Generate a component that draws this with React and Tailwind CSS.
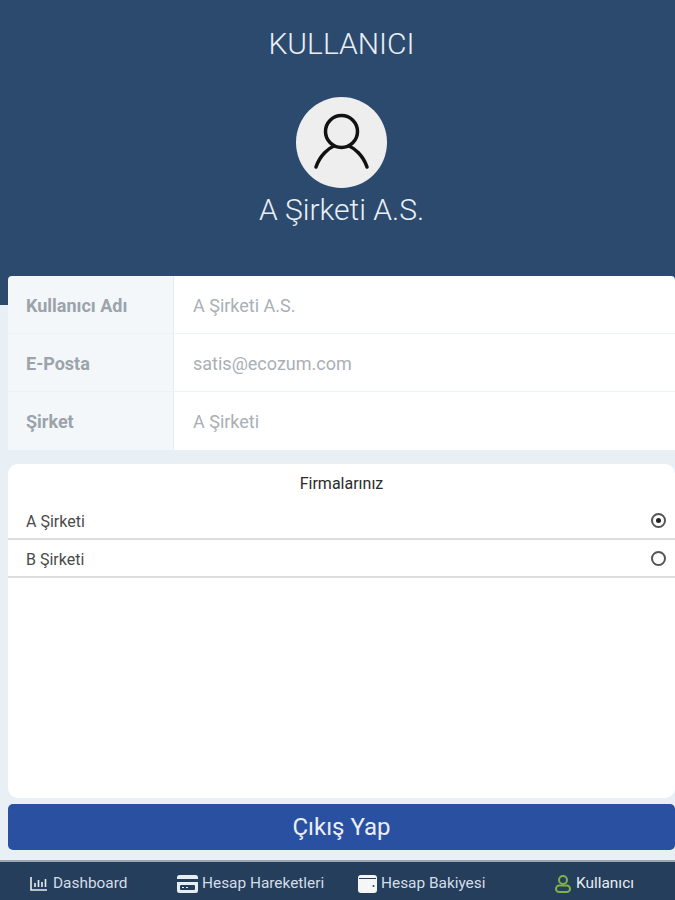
import React from 'react';

const DashboardIcon = () => (
    <svg width="19" height="16" viewBox="0 0 19 16" fill="none" stroke="#e8edf2" strokeWidth="1.6">
        <path d="M1 1v13h16" />
        <path d="M5 11V7M8.500 11V4M12 11V6M15.500 11V3" />
    </svg>
);

const CardIcon = () => (
    <svg width="21" height="18" viewBox="0 0 21 18">
        <rect x="0" y="0" width="21" height="18" rx="2.500" fill="#e8edf2" />
        <rect x="0" y="4" width="21" height="3" fill="#243e5c" />
        <rect x="3" y="10" width="15" height="5" rx="1" fill="#243e5c" />
        <path d="M5 12.500h2M9 12.500h2" stroke="#e8edf2" strokeWidth="1" />
    </svg>
);

const WalletIcon = () => (
    <svg width="19" height="18" viewBox="0 0 19 18">
        <rect x="0" y="0" width="19" height="18" rx="3" fill="#f4f6f8" />
        <path d="M1 3.500h17" stroke="#243e5c" strokeWidth="1" />
        <circle cx="15.500" cy="11" r="1" fill="#243e5c" />
    </svg>
);

const GreenUserIcon = () => (
    <svg width="18" height="18" viewBox="0 0 18 18" fill="none" stroke="#7fb24a" strokeWidth="2">
        <circle cx="9" cy="5" r="4" />
        <rect x="2" y="10.500" width="14" height="6.500" rx="3.250" />
    </svg>
);

const AvatarIcon = () => (
    <svg width="91" height="91" viewBox="0 0 91 91" fill="none" stroke="#111" strokeWidth="3.500" strokeLinecap="round">
        <circle cx="45.500" cy="34.500" r="16" />
        <path d="M20 70C24 58 33 51 38 49" />
        <path d="M71 70C67 58 58 51 53 49" />
    </svg>
);

const NavItem = ({ icon, label, className, active }) => (
    <div className={`flex items-center gap-[4px] ${className}`}>
        {icon}
        <span className={`text-[15.4px] ${active ? 'text-[#e8edf2]' : 'text-[#d5dde6]'}`}>{label}</span>
    </div>
);

const InfoRow = ({ label, value, last }) => (
    <div className={`flex h-[58px] ${last ? '' : 'border-b border-[#edf2f5]'}`}>
        <div className="w-[166px] bg-[#f3f7fa] border-r border-[#e6ecf0] flex items-center pl-[18px] pt-[1px] text-[18px] font-bold text-[#9ba3ab]">
            {label}
        </div>
        <div className="flex-1 bg-white flex items-center pl-[19px] pt-[1px] text-[18px] text-[#a9afb5]">{value}</div>
    </div>
);

const FirmRow = ({ name, selected }) => (
    <div className="h-[38px] border-b-2 border-[#dcdddd] flex items-center justify-between pl-[18px] pr-[9px] text-[16px] text-[#4a4a4a]">
        <span className="pt-[4px]">{name}</span>
        <span className="w-[15px] h-[15px] rounded-full border-2 border-[#555] flex items-center justify-center">
            {selected && <span className="w-[5px] h-[5px] rounded-full bg-[#222]" />}
        </span>
    </div>
);

export default function App() {
    return (
        <div className="w-[675px] h-[900px] bg-[#e9f0f5] flex flex-col overflow-hidden font-['Roboto',sans-serif]">
            <div className="h-[305px] bg-[#2c4a6e] flex flex-col items-center shrink-0 pl-[8px]">
                <h1 className="mt-[26px] text-[30px] leading-[36px] font-light text-[#e9eff5]">KULLANICI</h1>
                <div className="mt-[35px] w-[91px] h-[91px] rounded-full bg-[#eeeeee] flex items-center justify-center">
                    <AvatarIcon />
                </div>
                <div className="mt-[2px] text-[30px] leading-[40px] font-light text-[#e9eff5]">A Şirketi A.S.</div>
            </div>

            <div className="ml-[8px] -mt-[29px] rounded-tl-[4px] rounded-tr-[4px] overflow-hidden">
                <InfoRow label="Kullanıcı Adı" value="A Şirketi A.S." />
                <InfoRow label="E-Posta" value="satis@ecozum.com" />
                <InfoRow label="Şirket" value="A Şirketi" last />
            </div>

            <div className="ml-[8px] mt-[14px] h-[334px] bg-white rounded-[10px]">
                <div className="h-[38px] flex items-center justify-center pt-[2px] text-[16px] text-[#2b2b2b]">Firmalarınız</div>
                <FirmRow name="A Şirketi" selected />
                <FirmRow name="B Şirketi" />
            </div>

            <button className="ml-[8px] mt-[6px] h-[46px] bg-[#2a50a2] rounded-[5px] text-[24px] text-[#e9eff5] flex items-center justify-center">
                Çıkış Yap
            </button>

            <div className="mt-[10px] flex-1 bg-[#243e5c] border-t-2 border-[#9aa6b2] flex items-center pt-[6px]">
                <NavItem icon={<DashboardIcon />} label="Dashboard" className="ml-[30px] w-[147px]" />
                <NavItem icon={<CardIcon />} label="Hesap Hareketleri" className="w-[181px]" />
                <NavItem icon={<WalletIcon />} label="Hesap Bakiyesi" className="w-[196px]" />
                <NavItem icon={<GreenUserIcon />} label="Kullanıcı" active />
            </div>
        </div>
    );
}
